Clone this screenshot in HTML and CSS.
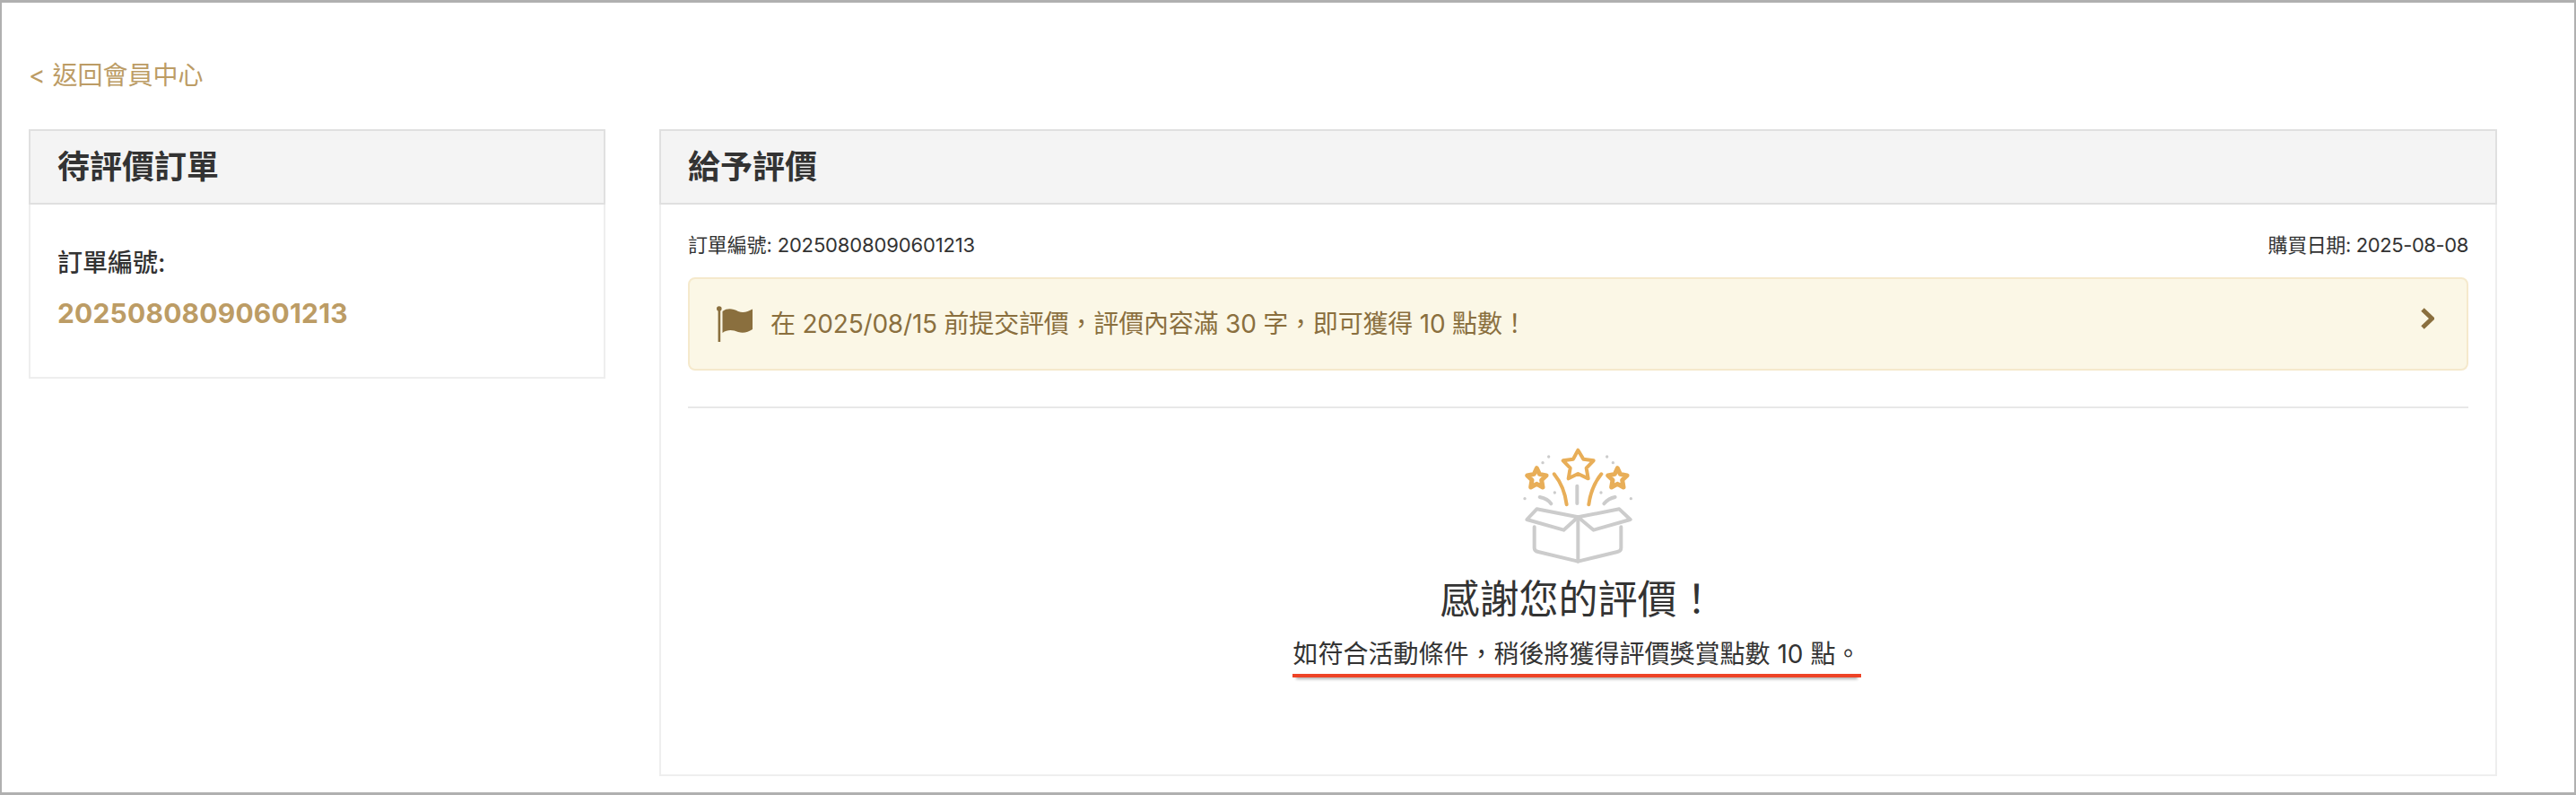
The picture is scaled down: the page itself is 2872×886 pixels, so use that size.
FILE: index.html
```html
<!DOCTYPE html>
<html lang="zh-Hant">
<head>
<meta charset="utf-8">
<title>給予評價</title>
<link rel="stylesheet" href="styles.css">
</head>
<body>
<div class="page">
  <a class="back" href="#">&lt; 返回會員中心</a>
  <div class="columns">
    <aside class="card side">
      <h2 class="card-head">待評價訂單</h2>
      <div class="side-body">
        <div class="label">訂單編號:</div>
        <div class="number">20250808090601213</div>
      </div>
    </aside>
    <main class="card main">
      <h2 class="card-head">給予評價</h2>
      <div class="main-body">
        <div class="meta">
          <span class="meta-order">訂單編號: 20250808090601213</span>
          <span class="meta-date">購買日期: 2025-08-08</span>
        </div>
        <div class="notice">
          <svg class="flag" viewBox="0 0 40 40" aria-hidden="true">
            <circle cx="2.800" cy="3" r="2.800"/>
            <rect x="1.600" y="3" width="2.600" height="37"/>
            <path d="M6.500 6C12 2 18 3 24 6C30 8.500 35 6 40 3.500V26C35 29 30 31 24 29C18 26.500 12 26 6.500 30Z"/>
          </svg>
          <span class="notice-text">在 2025/08/15 前提交評價，評價內容滿 30 字，即可獲得 10 點數！</span>
          <svg class="chevron" viewBox="0 0 15 24" aria-hidden="true"><path d="M2 2L12.500 12L2 22"/></svg>
        </div>
        <hr class="divider">
        <div class="thanks">
          <svg class="gift" viewBox="0 0 600 480" aria-hidden="true">
            <g class="gift-star">
              <path d="M298 68L316 98L350 103L326 128L332 163L298 147L266 163L272 128L248 103L282 98Z"/>
              <path d="M218 148C240 175 255 210 260 250"/>
              <path d="M376 148C354 175 339 210 334 250"/>
            </g>
            <g class="gift-star gift-star-small">
              <path d="M160 128L169 148L192 153L176 168L180 192L160 181L140 192L144 168L128 153L151 148Z"/>
              <path d="M430 128L439 148L462 153L446 168L450 192L430 181L410 192L414 168L398 153L421 148Z"/>
            </g>
            <g class="gift-box">
              <path d="M295 188V246"/>
              <path d="M170 225C185 228 200 235 208 247"/>
              <path d="M422 225C407 228 395 235 385 247"/>
              <path d="M298 292L160 265L127 300L250 335Z"/>
              <path d="M298 292L436 265L473 300L350 335Z"/>
              <path d="M152 325V395Q152 405 165 408L298 440L430 408Q442 405 442 395V325"/>
              <path d="M298 292V440"/>
            </g>
            <g class="gift-dots">
              <circle cx="200" cy="90" r="5"/><circle cx="180" cy="110" r="5"/>
              <circle cx="220" cy="210" r="5"/><circle cx="120" cy="230" r="5"/>
              <circle cx="395" cy="90" r="5"/><circle cx="415" cy="110" r="5"/>
              <circle cx="375" cy="210" r="5"/><circle cx="475" cy="230" r="5"/>
            </g>
          </svg>
          <h3 class="thanks-title">感謝您的評價！</h3>
          <p class="thanks-text"><span class="marked">如符合活動條件，稍後將獲得評價獎賞點數 10 點。</span></p>
        </div>
      </div>
    </main>
  </div>
</div>
</body>
</html>
```

FILE: styles.css
```css
* { box-sizing: border-box; }
html, body { margin: 0; padding: 0; background: #fff; }
body {
  font-family: "Inter", "Noto Sans CJK TC", sans-serif;
  color: #333;
}
.page {
  width: 2872px;
  height: 886px;
  border: solid #b0b0b0;
  border-width: 3px 2px;
  padding: 61px 0 0 30px;
  overflow: hidden;
}
.back {
  display: block;
  height: 40px;
  line-height: 40px;
  font-size: 28px;
  color: #bc9c65;
  text-decoration: none;
  margin-bottom: 40px;
}
.columns { display: flex; gap: 60px; align-items: flex-start; }
.card { border: 2px solid #eee; }
.side { width: 643px; height: 278px; }
.main { width: 2049px; height: 721px; }
.card-head {
  height: 84px;
  margin: -2px -2px 0;
  padding: 0 30px;
  border: 2px solid #e0e0e0;
  background: #f4f4f4;
  font-size: 36px;
  font-weight: 700;
  line-height: 80px;
}
.side-body { padding: 45px 30px 0; }
.label { font-size: 28px; font-weight: 500; line-height: 40px; }
.number {
  margin-top: 16px;
  font-size: 30px;
  font-weight: 700;
  line-height: 40px;
  letter-spacing: 0.2px;
  color: #bc9c65;
}
.main-body { padding: 30px 30px 0; }
.meta {
  display: flex;
  justify-content: space-between;
  font-size: 22px;
  line-height: 30px;
}
.meta-order { letter-spacing: -0.15px; }
.meta-date { letter-spacing: -0.4px; }
.notice {
  display: flex;
  align-items: center;
  height: 104px;
  margin-top: 21px;
  padding: 0 36px 0 30px;
  border: 2px solid #f5e9cc;
  border-radius: 8px;
  background: #fbf7e6;
  color: #8a6f3e;
}
.flag { width: 40px; height: 40px; flex: none; fill: #8a6f3e; }
.notice-text {
  flex: 1;
  margin-left: 20px;
  font-size: 28px;
  line-height: 40px;
  letter-spacing: -0.2px;
}
.chevron {
  width: 15px;
  height: 24px;
  flex: none;
  margin-bottom: 12px;
  fill: none;
  stroke: #8a6f3e;
  stroke-width: 5;
}
.divider { height: 2px; margin: 40px 0 0; border: 0; background: #e8e8e8; }
.thanks { display: flex; flex-direction: column; align-items: center; padding-top: 24px; }
.gift { display: block; width: 200px; height: 160px; }
.gift-star, .gift-box {
  fill: none;
  stroke-width: 12;
  stroke-linecap: round;
  stroke-linejoin: round;
}
.gift-star { stroke: #e8ae58; }
.gift-star-small { stroke-width: 15; }
.gift-box { stroke: #ccc; }
.gift-dots { fill: #ccc; }
.thanks-title {
  margin: 1px 0 0;
  font-size: 44px;
  font-weight: 400;
  line-height: 56px;
}
.thanks-text { margin: 13px 0 0; font-size: 28px; line-height: 40px; }
.marked {
  display: inline-block;
  padding: 0 1px 2px;
  margin-right: 3px;
  border-bottom: 4px solid #ee4326;
  box-shadow: 0 6px 3px -4px rgba(0, 0, 0, 0.3);
}
```
